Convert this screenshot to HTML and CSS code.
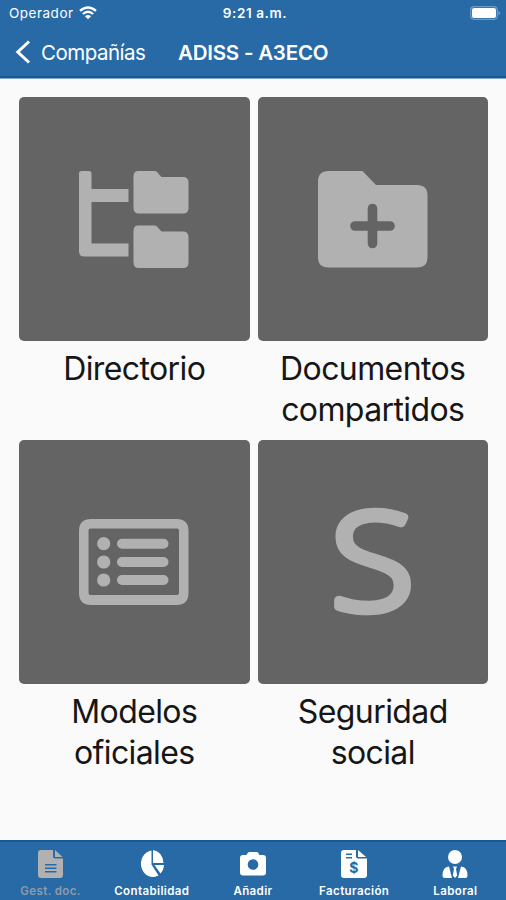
FILE: index.html
```html
<!DOCTYPE html>
<html lang="es">
<head>
    <meta charset="UTF-8">
    <meta name="viewport" content="width=device-width, initial-scale=1.0">
    <title>ADISS - A3ECO</title>
    <link rel="stylesheet" href="styles.css">
</head>
<body>
    <header>
        <div class="status-bar">
            <div class="carrier">
                <span>Operador</span>
                <svg width="18" height="14" viewBox="0 0 18 14" fill="none" stroke="#fff" stroke-width="2.3">
                    <path d="M1 4.9 Q9 -2 17 4.9"/>
                    <path d="M3.9 8 Q9 3.6 14.1 8"/>
                    <path d="M9 13.2 L5.9 10.3 Q9 7.7 12.1 10.3 Z" fill="#fff" stroke="none"/>
                </svg>
            </div>
            <span class="time">9:21 a.m.</span>
            <svg class="battery" width="31" height="14" viewBox="0 0 31 14">
                <rect x=".7" y=".7" width="26.6" height="12.6" rx="3.5" fill="none" stroke="#6f9bc6" stroke-width="1.2"/>
                <rect x="2" y="2" width="24" height="10" rx="2" fill="#fff"/>
                <path d="M28.6 4.7 Q31 7 28.6 9.3 Z" fill="#8fb3d6"/>
            </svg>
        </div>
        <nav class="nav-bar">
            <a class="back">
                <svg width="16" height="24" viewBox="0 0 16 24" fill="none" stroke="#fff" stroke-width="3">
                    <path d="M14 1.5 L2.8 12 L14 22.5"/>
                </svg>
                <span>Compañías</span>
            </a>
            <h1>ADISS - A3ECO</h1>
        </nav>
    </header>

    <main class="menu">
        <a class="item">
            <div class="tile">
                <svg width="110" height="98" viewBox="0 0 110 98">
                    <path d="M2.5 0H10Q12.5 0 12.5 2.5V18H49.5V31H12.5V72.5H49.5V85.5H5Q0 85.5 0 80.5V2.5Q0 0 2.5 0Z"/>
                    <path id="folder" d="M59 0H75.5Q77 0 78 1L82.5 6H104Q109.5 6 109.5 11.5V37Q109.5 42.5 104 42.5H60Q54.5 42.5 54.5 37V5.5Q54.5 0 59 0Z"/>
                    <use href="#folder" y="54.5"/>
                </svg>
            </div>
            <div class="label">Directorio</div>
        </a>
        <a class="item">
            <div class="tile">
                <svg width="110" height="98" viewBox="0 0 110 98">
                    <path d="M10.5 0H44.5L58 14H99Q109.5 14 109.5 24.5V86Q109.5 96.5 99 96.5H10.5Q0 96.5 0 86V10.5Q0 0 10.5 0Z"/>
                    <path d="M54.5 37.5V72.5M37 55H72" fill="none" stroke="#646464" stroke-width="9.6" stroke-linecap="round"/>
                </svg>
            </div>
            <div class="label">Documentos compartidos</div>
        </a>
        <a class="item">
            <div class="tile">
                <svg width="110" height="88" viewBox="0 0 110 88">
                    <path fill-rule="evenodd" d="M12 0H97.5Q109.5 0 109.5 12V74Q109.5 86 97.5 86H12Q0 86 0 74V12Q0 0 12 0ZM11.5 9.5Q9.5 9.5 9.5 11.5V74Q9.5 76 11.5 76H98Q100 76 100 74V11.5Q100 9.5 98 9.5Z"/>
                    <circle cx="24.7" cy="24.7" r="6.6"/>
                    <circle cx="24.7" cy="43" r="6.6"/>
                    <circle cx="24.7" cy="61" r="6.6"/>
                    <path d="M43 24.7H84.5M43 43H84.5M43 61H84.5" fill="none" stroke="#b1b1b1" stroke-width="10" stroke-linecap="round"/>
                </svg>
            </div>
            <div class="label">Modelos oficiales</div>
        </a>
        <a class="item">
            <div class="tile">
                <svg width="200" height="220" viewBox="-100 -110 200 220">
                    <text class="letter" transform="scale(1.14 1)" x="-0.5" y="47" text-anchor="middle">S</text>
                </svg>
            </div>
            <div class="label">Seguridad social</div>
        </a>
    </main>

    <footer class="tab-bar">
        <a class="tab active">
            <svg width="28" height="28" viewBox="0 0 28 28">
                <path fill-rule="evenodd" d="M4 0H16V6.5Q16 8.5 18 8.5H26V25Q26 28 23 28H4Q1 28 1 25V3Q1 0 4 0ZM8 14V15.6H19.5V14ZM8 17.5V19.1H19.5V17.5ZM8 21V22.6H19.5V21Z"/>
                <path d="M18 0L25.5 7H18Z"/>
            </svg>
            <span>Gest. doc.</span>
        </a>
        <a class="tab">
            <svg width="28" height="28" viewBox="0 0 28 28">
                <path d="M13.5 .5V14.5L20.5 25.5A12 13.3 0 1 1 13.5 .5Z"/>
                <path d="M15 0Q24.5 1.5 25.5 13H15Z"/>
                <path d="M16.5 15H26Q25.5 20.5 22.5 23.5Z"/>
            </svg>
            <span>Contabilidad</span>
        </a>
        <a class="tab">
            <svg width="28" height="28" viewBox="0 0 28 28">
                <path fill-rule="evenodd" d="M4 5H7.5L9 2.5Q9.5 2 10.5 2H17.5Q18.5 2 19 2.5L20.5 5H24Q27 5 27 8V22.5Q27 25.5 24 25.5H4Q1 25.5 1 22.5V8Q1 5 4 5ZM14 9.2A5.3 5.3 0 1 0 14 19.8A5.3 5.3 0 1 0 14 9.2Z"/>
            </svg>
            <span>Añadir</span>
        </a>
        <a class="tab">
            <svg width="28" height="28" viewBox="0 0 28 28">
                <path fill-rule="evenodd" d="M4 0H16V6.5Q16 8.5 18 8.5H27V25Q27 28 24 28H4Q1 28 1 25V3Q1 0 4 0ZM6 3.5V5H12V3.5ZM6 7V8.5H12V7Z"/>
                <path d="M18 0L26 7H18Z"/>
                <text class="dollar" x="14" y="23" text-anchor="middle">$</text>
            </svg>
            <span>Facturación</span>
        </a>
        <a class="tab">
            <svg width="28" height="28" viewBox="0 0 28 28">
                <circle cx="14" cy="7" r="7"/>
                <path d="M8 16.5L11 28H4Q1.5 28 1.5 25.5Q1.5 17 8 16.5Z"/>
                <path d="M20 16.5L17 28H24Q26.5 28 26.5 25.5Q26.5 17 20 16.5Z"/>
                <path d="M12 16.5H16L15 19L16.2 25.5L14 28L11.8 25.5L13 19Z"/>
            </svg>
            <span>Laboral</span>
        </a>
    </footer>
</body>
</html>
```
FILE: styles.css
```css
* {
    box-sizing: border-box;
}

body {
    margin: 0;
    height: 900px;
    display: flex;
    flex-direction: column;
    background-color: #fafafa;
    font-family: Inter, "Liberation Sans", sans-serif;
}

svg {
    display: block;
}

header {
    height: 79px;
    background-color: #286aa6;
    border-bottom: 1px solid #86a9c9;
    box-shadow: inset 0 -2px #17589a;
    color: #fff;
}

.status-bar {
    height: 26px;
    padding: 0 5px 0 9px;
    display: grid;
    grid-template-columns: 1fr auto 1fr;
    align-items: center;
    font-size: 13.5px;
}

.carrier {
    display: flex;
    align-items: center;
    gap: 5px;
    letter-spacing: 0.5px;
}

.time {
    font-weight: 600;
    letter-spacing: 0.6px;
}

.battery {
    justify-self: end;
}

.nav-bar {
    height: 52px;
    padding-left: 15px;
    display: flex;
    align-items: center;
}

.back {
    width: 163px;
    display: flex;
    align-items: center;
    gap: 10px;
    font-size: 20.5px;
    letter-spacing: -0.5px;
}

h1 {
    margin: 0;
    font-size: 20.5px;
    font-weight: 600;
    letter-spacing: -0.22px;
}

.menu {
    flex: 1;
    padding: 18px 18px 0 19px;
    display: grid;
    grid-template-columns: 1fr 1fr;
    grid-auto-rows: 343px;
    column-gap: 8px;
}

.tile {
    height: 244px;
    padding-top: 1px;
    border-radius: 5px;
    background-color: #646464;
    display: flex;
    align-items: center;
    justify-content: center;
    fill: #b1b1b1;
}

.label {
    width: 200px;
    margin: 7px auto 0;
    color: #161616;
    font-size: 32px;
    line-height: 41px;
    letter-spacing: -0.6px;
    text-align: center;
}

.letter {
    font-family: "Open Sans", sans-serif;
    font-size: 134px;
    font-weight: 300;
    stroke: #b1b1b1;
    stroke-width: 8.5px;
    stroke-linejoin: round;
}

.tab-bar {
    height: 60px;
    padding-top: 8px;
    background-color: #286aa6;
    border-top: 2px solid #17589a;
    display: grid;
    grid-template-columns: repeat(5, 1fr);
}

.tab {
    display: flex;
    flex-direction: column;
    align-items: center;
    gap: 6px;
    color: #fff;
    fill: #fff;
    font-size: 11.5px;
    font-weight: 600;
    line-height: 15px;
    letter-spacing: 0.4px;
}

.tab.active {
    color: #8d9cab;
    fill: #b1b1b1;
}

.dollar {
    fill: #286aa6;
    font-size: 14px;
    font-weight: 700;
}
```
